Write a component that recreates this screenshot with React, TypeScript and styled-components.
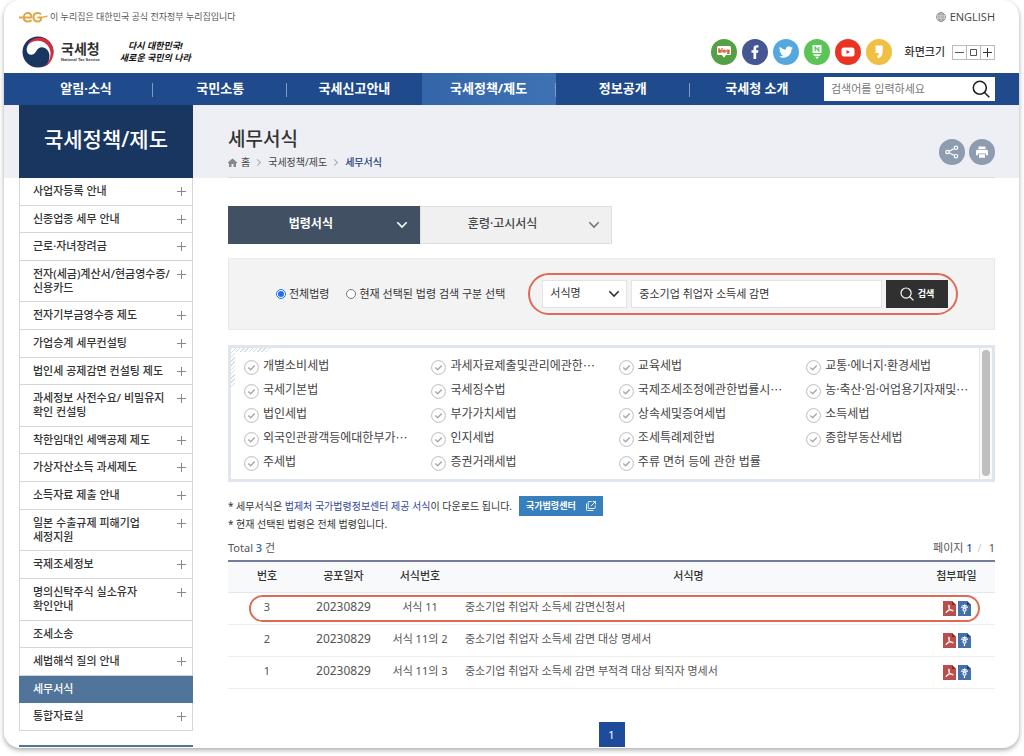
import React from "react";
import styled, { createGlobalStyle, css } from "styled-components";

const GlobalStyle = createGlobalStyle`
  *, *::before, *::after { box-sizing: border-box; }
  body {
    margin: 0;
    background: #fff;
    color: #333;
    font-family: "Noto Sans", "Noto Sans CJK KR", sans-serif;
    font-size: 11px;
    line-height: 16px;
  }
  a { color: inherit; text-decoration: none; }
  ul, ol { list-style: none; margin: 0; padding: 0; }
  h1, h2, p { margin: 0; }
  button, input, select { font: inherit; color: inherit; }
  button { padding: 0; border: 0; cursor: pointer; }
`;

const Card = styled.div`
  margin: 0 5px 8px 4px;
  overflow: hidden;
  background: #fff;
  border-radius: 16px;
  box-shadow: 0 2px 5px rgba(0, 0, 0, 0.34);
`;

/* ---------- header ---------- */

const TopBar = styled.div`
  display: flex;
  justify-content: space-between;
  align-items: center;
  height: 34px;
  padding: 0 24px 0 15px;
`;

const Notice = styled.p`
  display: flex;
  align-items: center;
  gap: 2px;
  font-size: 9px;
  color: #555;
`;

const LangLink = styled.a`
  display: flex;
  align-items: center;
  gap: 4px;
  color: #444;
  font-family: "Open Sans", sans-serif;
`;

const BrandBar = styled.div`
  display: flex;
  align-items: center;
  height: 39px;
  padding: 0 24px 3px 18px;
`;

const Brand = styled.a`
  display: flex;
  align-items: center;
  gap: 7px;
`;

const BrandText = styled.span`
  display: flex;
  flex-direction: column;
`;

const BrandName = styled.strong`
  font-size: 14px;
  line-height: 16px;
  color: #333;
`;

const BrandSub = styled.span`
  font-family: "Liberation Sans", sans-serif;
  font-size: 4px;
  font-weight: 700;
  line-height: 6px;
`;

const Slogan = styled.p`
  display: flex;
  flex-direction: column;
  margin-left: 20px;
  font-size: 9px;
  font-style: italic;
  font-weight: 700;
  line-height: 12px;
  text-align: center;
  color: #111;
`;

const Social = styled.ul`
  display: flex;
  gap: 5px;
  margin-left: auto;
`;

const SocialLink = styled.a<{ $bg: string }>`
  display: flex;
  align-items: center;
  justify-content: center;
  width: 26px;
  height: 26px;
  border-radius: 50%;
  background: ${(p) => p.$bg};
`;

const SizeLabel = styled.span`
  margin: 0 7px 0 13px;
  font-weight: 500;
`;

const SizeGroup = styled.div`
  display: flex;
  border: 1px solid #bbb;
`;

const SizeButton = styled.button`
  display: flex;
  align-items: center;
  justify-content: center;
  width: 13px;
  height: 13px;
  background: #fff;
  &:not(:first-child) {
    width: 14px;
    border-left: 1px solid #bbb;
  }
`;

const Nav = styled.nav`
  display: flex;
  align-items: center;
  height: 32px;
  padding: 0 24px 0 15px;
  background: #1f4b8d;
`;

const NavList = styled.ul`
  display: flex;
  flex: 1;
`;

const NavItem = styled.li<{ $active?: boolean; $divided?: boolean }>`
  position: relative;
  flex: 1 1 0;
  ${(p) => p.$active && css`background: linear-gradient(90deg, #3365a8, #3f72b4);`}
  ${(p) =>
    p.$divided &&
    css`
      &::after {
        content: "";
        position: absolute;
        top: 10px;
        right: 0;
        width: 1px;
        height: 14px;
        background: #7f9cc7;
      }
    `}
`;

const NavLink = styled.a`
  display: block;
  height: 32px;
  color: #fff;
  font-size: 13px;
  font-weight: 700;
  line-height: 30px;
  text-align: center;
`;

const SiteSearch = styled.form`
  display: flex;
  align-items: center;
  width: 171px;
  height: 24px;
  padding: 0 5px 0 7px;
  background: #fff;
`;

const SiteSearchInput = styled.input`
  flex: 1;
  min-width: 0;
  height: 22px;
  padding: 0 0 2px;
  border: 0;
  outline: 0;
  background: none;
  font-size: 11px;
  &::placeholder { color: #777; opacity: 1; }
`;

const IconButton = styled.button`
  display: flex;
  background: none;
`;

/* ---------- page heading ---------- */

const PageHead = styled.div`
  display: flex;
  gap: 35px;
  height: 73px;
  padding: 0 24px 0 15px;
  background: #eeeff4;
`;

const SideTitle = styled.h2`
  width: 174px;
  background: #18365f;
  color: #fff;
  font-size: 21px;
  font-weight: 500;
  line-height: 68px;
  text-align: center;
`;

const HeadContent = styled.div`
  display: flex;
  flex: 1;
  justify-content: space-between;
  align-items: flex-start;
  padding-top: 22px;
  border-bottom: 1px solid #dcdde3;
`;

const Title = styled.h1`
  font-size: 19px;
  font-weight: 500;
  line-height: 24px;
`;

const Crumbs = styled.ol`
  display: flex;
  align-items: center;
  margin-top: 4px;
  font-size: 10px;
  line-height: 14px;
  color: #444;
`;

const Crumb = styled.li<{ $current?: boolean }>`
  display: flex;
  align-items: center;
  ${(p) => p.$current && css`color: #1f3f78; font-weight: 500;`}
  a { display: flex; align-items: center; gap: 4px; }
  &:not(:first-child)::before {
    content: "";
    width: 5px;
    height: 5px;
    margin: 0 8px 0 5px;
    border: solid #aaa;
    border-width: 1px 1px 0 0;
    transform: rotate(45deg);
  }
`;

const Tools = styled.div`
  display: flex;
  gap: 4px;
  padding-top: 12px;
`;

const RoundButton = styled.button`
  display: flex;
  align-items: center;
  justify-content: center;
  width: 26px;
  height: 26px;
  border-radius: 50%;
  background: #8d9cb0;
`;

/* ---------- body ---------- */

const Body = styled.div`
  display: flex;
  gap: 35px;
  padding: 0 24px 0 15px;
`;

const Sidebar = styled.aside`
  display: flex;
  flex-direction: column;
  width: 174px;
  &::after {
    content: "";
    height: 3px;
    margin-top: 14px;
    border-top: 2px solid #51749a;
  }
`;

const Menu = styled.ul`
  display: flex;
  flex: 1;
  flex-direction: column;
  border: solid #d6d6d6;
  border-width: 0 1px;
`;

const MenuItem = styled.li<{ $active?: boolean }>`
  display: flex;
  flex: 1 0 auto;
  justify-content: space-between;
  padding: 6px 6px 6px 13px;
  border-bottom: 1px solid #d6d6d6;
  font-weight: 500;
  line-height: 14px;
  white-space: pre-line;
  ${(p) =>
    p.$active &&
    css`
      margin: 0 -1px;
      padding-left: 14px;
      border-color: #51749a;
      background: #51749a;
      color: #fff;
    `}
`;

const Main = styled.main`
  flex: 1;
  min-width: 0;
  padding: 28px 0 1px;
`;

const Tabs = styled.div`
  display: flex;
  width: 50%;
`;

const Tab = styled.button<{ $active?: boolean }>`
  display: flex;
  flex: 1;
  align-items: center;
  height: 38px;
  padding: 0 11px 0 9px;
  border: 1px solid ${(p) => (p.$active ? "#425063" : "#dfdfdf")};
  background: ${(p) => (p.$active ? "#425063" : "#f0f0f0")};
  color: ${(p) => (p.$active ? "#fff" : "#444")};
  font-size: 12px;
  font-weight: ${(p) => (p.$active ? 700 : 500)};
  span { flex: 1; padding: 0 12px 2px 0; }
`;

const SearchPanel = styled.form`
  display: flex;
  align-items: center;
  height: 72px;
  margin-top: 14px;
  padding: 0 36px 0 47px;
  border: 1px solid #e9e9e9;
  background: #f3f3f3;
`;

const RadioLabel = styled.label`
  display: flex;
  align-items: center;
  gap: 3px;
  margin-right: 17px;
  white-space: nowrap;
  input { width: 10px; height: 10px; margin: 0; accent-color: #1f6ff0; }
`;

const Highlight = styled.div`
  display: flex;
  flex: 1;
  gap: 4px;
  min-width: 0;
  margin-left: 6px;
  padding: 5px 8px 5px 12px;
  border: 2px solid #df6a56;
  border-radius: 21px;
`;

const SelectWrap = styled.div`
  position: relative;
  width: 85px;
  svg {
    position: absolute;
    top: 10px;
    right: 7px;
    pointer-events: none;
  }
`;

const fieldBox = css`
  height: 28px;
  padding: 0 7px 2px;
  border: 1px solid #e2e4e4;
  border-radius: 0;
  background: #fff;
`;

const Select = styled.select`
  ${fieldBox}
  width: 100%;
  appearance: none;
`;

const Keyword = styled.input`
  ${fieldBox}
  flex: 1;
  min-width: 0;
`;

const SearchButton = styled.button`
  display: flex;
  align-items: center;
  justify-content: center;
  gap: 4px;
  width: 62px;
  height: 28px;
  background: #303030;
  color: #fff;
  font-size: 9px;
  font-weight: 700;
`;

const LawBox = styled.div`
  position: relative;
  display: flex;
  height: 137px;
  margin-top: 15px;
  border: 3px solid #dfe6ee;
  &::before {
    content: "";
    position: absolute;
    top: 0;
    left: 0;
    width: 41px;
    height: 41px;
    background: repeating-linear-gradient(135deg, #d5dfea 0 1px, #fff 1px 3px);
    clip-path: polygon(0 0, 100% 0, 92% 10%, 10% 10%, 10% 92%, 0 100%);
  }
`;

const LawGrid = styled.ul`
  display: grid;
  flex: 1;
  grid-template-columns: repeat(3, 51fr) 47fr;
  grid-auto-rows: 24px;
  padding: 6px 0 0 13px;
`;

const LawLabel = styled.label`
  position: relative;
  display: flex;
  align-items: center;
  height: 24px;
  color: #444;
  font-size: 12px;
  white-space: nowrap;
  svg { margin: 3px 4px 0 0; }
  input {
    position: absolute;
    width: 15px;
    height: 15px;
    margin: 0;
    opacity: 0;
  }
`;

/* the Korean face sets the ellipsis at mid-height */
const Ellipsis = styled.span`
  font-family: "Noto Sans CJK KR", sans-serif;
`;

const ScrollTrack = styled.div`
  width: 13px;
  padding: 2px 2px 3px;
  border-left: 1px solid #e6e6e6;
  background: #fafafa;
`;

const ScrollThumb = styled.div`
  width: 8px;
  height: 100%;
  border-radius: 4px;
  background: #bfbfbf;
`;

const Note = styled.p`
  display: flex;
  align-items: center;
  font-size: 10px;
  line-height: 16px;
  white-space: pre;
`;

const Notes = styled.div`
  margin-top: 14px;
`;

const NoteLink = styled.a`
  color: #2f4599;
`;

const CenterLink = styled.a`
  display: flex;
  align-items: center;
  justify-content: space-between;
  width: 84px;
  height: 20px;
  margin-left: 7px;
  padding: 0 7px;
  background: #3880bd;
  color: #fff;
  font-size: 9px;
  font-weight: 700;
`;

const ListInfo = styled.div`
  display: flex;
  justify-content: space-between;
  margin: 8px 0 4px;
  color: #555;
`;

const Accent = styled.strong`
  color: #2c5cab;
  font-weight: 500;
`;

const Slash = styled.span`
  margin: 0 7px 0 5px;
  color: #ccc;
`;

const Table = styled.table`
  width: 100%;
  border-top: 2px solid #757d9b;
  border-spacing: 0;
  table-layout: fixed;
  text-align: center;
`;

const Th = styled.th<{ $width?: number }>`
  ${(p) => p.$width && css`width: ${p.$width}px;`}
  height: 31px;
  padding: 0 0 3px;
  border-bottom: 1px solid #e4e7ec;
  background: #f8f9fb;
  font-weight: 500;
`;

const Row = styled.tr`
  position: relative;
`;

const Td = styled.td<{ $left?: boolean; $large?: boolean }>`
  height: 32px;
  padding: 0 0 3px ${(p) => (p.$left ? 6 : 0)}px;
  border-bottom: 1px solid #efefef;
  color: #555;
  font-size: ${(p) => (p.$large ? 12 : 11)}px;
  text-align: ${(p) => (p.$left ? "left" : "center")};
`;

const RowRing = styled.span`
  position: absolute;
  inset: 2px 15px 3px 21px;
  border: 2px solid #df6a56;
  border-radius: 14px;
  pointer-events: none;
`;

const Files = styled.span`
  display: flex;
  justify-content: center;
  gap: 2px;
  a { display: flex; padding-top: 2px; }
`;

const Pagination = styled.nav`
  display: flex;
  justify-content: center;
  margin-top: 33px;
`;

const PageButton = styled.button`
  width: 26px;
  height: 25px;
  background: #1f4b9b;
  color: #fff;
  font-size: 11px;
`;

/* ---------- icons ---------- */

const EgMark = () => (
  <svg width="29" height="12" viewBox="0 0 29 12" fill="none" stroke="#e0a84a" strokeWidth="2" aria-hidden="true">
    <path d="M0 6.500h12.500c0-3-1.800-4.500-3.800-4.500S4.800 3.600 4.800 6.300s1.800 4.300 4 4.300c1.500 0 2.700-.5 3.600-1.600" />
    <path d="M22 3.300C21.200 2.300 20 2 18.700 2c-2.500 0-4.200 1.800-4.200 4.300s1.700 4.300 4.200 4.300c2.200 0 3.600-1.500 3.600-4.100H18.500" />
    <path d="M22 6.500c2.500 0 4-1.200 6.500-1.200" strokeWidth="1.500" />
  </svg>
);

const Globe = () => (
  <svg width="10" height="10" viewBox="0 0 9 9" fill="none" stroke="#888" strokeWidth="0.800" aria-hidden="true">
    <circle cx="4.500" cy="4.500" r="4" />
    <ellipse cx="4.500" cy="4.500" rx="1.900" ry="4" />
    <path d="M.5 4.500h8M4.500.5v8M1.200 2.500h6.600M1.200 6.500h6.600" strokeWidth="0.600" />
  </svg>
);

const Taegeuk = () => (
  <svg width="32" height="32" viewBox="0 0 32 32" aria-hidden="true">
    <circle cx="16" cy="16" r="15.500" fill="#18365f" />
    <path d="M5.500 10C7.500 5 12 2.500 17 2.500c7 0 11.500 5 14 11L32 32h-9.500c3.500-3.500 5.300-8 5-12.500-.3-4.500-3.500-8.300-7.500-8.300-3 0-4.600 1.800-5.800 4-1.300 2.300-3 3.600-5.200 3.600-3.500 0-5.500-4.500-3.500-8.800z" fill="#fff" />
    <path d="M5.500 9.500C7.800 4.500 12 1.800 17 1.800c3 0 5.200.4 7.500 1.700C29 6.200 31.700 11 31.500 16.500c-.3 6.500-3.500 11.500-9 14.500 4-4 6.300-8.800 6-14C28.200 9.800 22.500 4.700 16 4.700c-4.500 0-8 1.500-10.500 4.800z" fill="#d9293b" />
  </svg>
);

const BlogIcon = () => (
  <svg width="16" height="14" viewBox="0 0 16 14" aria-hidden="true">
    <path d="M2.500 1h11Q15 1 15 2.500v6Q15 10 13.500 10H10l-2 2.800L6 10H2.500Q1 10 1 8.500v-6Q1 1 2.500 1z" fill="#fff" />
    <g fill="none" stroke="#d8582b" strokeWidth="1.200">
      <path d="M3 3v4.500M6 3v4.500M12.900 4.500v4H11" />
      <circle cx="3.900" cy="6.200" r="1" />
      <circle cx="8.300" cy="6.200" r="1" />
      <circle cx="11.800" cy="6.100" r="1" />
    </g>
  </svg>
);

const FacebookIcon = () => (
  <svg width="14" height="16" viewBox="0 0 14 16" aria-hidden="true">
    <path d="M5.500 15V8.800h-2V6.200h2V4.500C5.500 2.300 6.700 1.200 8.800 1.200c.8 0 1.300 0 1.700.1v2.300H9.300c-.9 0-1.100.5-1.100 1.200v1.400h2.200l-.3 2.600H8.200V15z" fill="#fff" />
  </svg>
);

const TwitterIcon = () => (
  <svg width="14" height="14" viewBox="0 0 24 24" aria-hidden="true">
    <path d="M23.950 4.570a10 10 0 0 1-2.820.77 4.960 4.960 0 0 0 2.160-2.720c-.95.55-2 .95-3.130 1.180a4.920 4.920 0 0 0-8.380 4.480C7.690 8.100 4.070 6.130 1.640 3.160a4.920 4.920 0 0 0 1.520 6.570 4.900 4.900 0 0 1-2.230-.61v.06a4.920 4.920 0 0 0 3.950 4.830 5 5 0 0 1-2.210.08 4.940 4.940 0 0 0 4.600 3.420A9.870 9.870 0 0 1 0 19.540a14 14 0 0 0 7.550 2.210c9.050 0 14-7.500 14-13.980 0-.21 0-.42-.02-.63a9.940 9.940 0 0 0 2.420-2.570z" fill="#fff" />
  </svg>
);

const PostIcon = () => (
  <svg width="12" height="16" viewBox="0 0 12 16" aria-hidden="true">
    <path d="M1.500 1h9v8h-9z" fill="#fff" />
    <path d="M4.200 7.200V3l3.600 4V3" fill="none" stroke="#5cc457" strokeWidth="1.200" />
    <path d="M1.500 10.300h9L8.300 12H3.700zM4 12.800h4L6 15z" fill="#fff" />
  </svg>
);

const YoutubeIcon = () => (
  <svg width="14" height="10" viewBox="0 0 14 10" aria-hidden="true">
    <rect x="0.500" y="0.500" width="13" height="9" rx="2.500" fill="#fff" />
    <path d="M5.500 3v4L9 5z" fill="#ea3323" />
  </svg>
);

const StoryIcon = () => (
  <svg width="12" height="16" viewBox="0 0 12 16" aria-hidden="true">
    <path d="M2.500 1.500h7.200v6c0 3.500-1.500 5.700-4.200 7L3.800 12.300c1.400-.8 2.100-1.900 2.200-3.300H2.500z" fill="#fff" />
  </svg>
);

const SearchIcon = ({ size, color, width }: { size: number; color: string; width: number }) => (
  <svg width={size} height={size} viewBox="0 0 18 18" fill="none" stroke={color} strokeWidth={width} aria-hidden="true">
    <circle cx="7.800" cy="7.800" r="6.500" />
    <path d="M12.500 12.500l4.800 4.800" />
  </svg>
);

const HomeIcon = () => (
  <svg width="9" height="9" viewBox="0 0 9 9" aria-hidden="true">
    <path d="M4.500.5L0 4.300v.9h1V9h2.500V6h2v3H8V5.200h1v-.9z" fill="#888" />
  </svg>
);

const ShareIcon = () => (
  <svg width="14" height="14" viewBox="0 0 14 14" fill="none" stroke="#fff" strokeWidth="1.200" aria-hidden="true">
    <circle cx="2.500" cy="7" r="1.700" />
    <circle cx="11" cy="2.800" r="1.700" />
    <circle cx="11" cy="11.200" r="1.700" />
    <path d="M4 6.200l5.500-2.700M4 7.800l5.500 2.700" />
  </svg>
);

const PrintIcon = () => (
  <svg width="14" height="14" viewBox="0 0 14 14" aria-hidden="true">
    <path d="M3.500 1.500h7V4h-7zM2.500 4.800h9q1.500 0 1.500 1.500v4h-2V8.500H3v1.800H1v-4q0-1.500 1.500-1.500zM4 9.300h6v3.400H4z" fill="#fff" />
  </svg>
);

const PlusIcon = () => (
  <svg width="9" height="9" viewBox="0 0 9 9" stroke="#888" aria-hidden="true">
    <path d="M0 4.500h9M4.500 0v9" />
  </svg>
);

const Plus = styled.button`
  display: flex;
  flex: none;
  align-self: flex-start;
  padding-top: 3px;
  background: none;
`;

const Chevron = ({ color }: { color: string }) => (
  <svg width="12" height="8" viewBox="0 0 12 8" fill="none" stroke={color} strokeWidth="1.600" aria-hidden="true">
    <path d="M1.300 1.300L6 6l4.700-4.700" />
  </svg>
);

const CheckCircle = () => (
  <svg width="15" height="15" viewBox="0 0 15 15" fill="none" aria-hidden="true">
    <circle cx="7.500" cy="7.500" r="6.900" stroke="#bbb" />
    <path d="M4.300 7.500l2.400 2.300 4-4.200" stroke="#aaa" strokeWidth="1.500" />
  </svg>
);

const ExternalIcon = () => (
  <svg width="10" height="10" viewBox="0 0 10 10" fill="none" stroke="#fff" strokeWidth="0.900" aria-hidden="true">
    <path d="M5.500.5H3q-.8 0-.8.8v5.400q0 .8.800.8h5.400q.8 0 .8-.8V4.500M.5 2.500v6.200q0 .8.800.8h6.200M5 5l4-4M6.700.500h2.800v2.800" />
  </svg>
);

const PdfIcon = () => (
  <svg width="13" height="15" viewBox="0 0 13 15" aria-hidden="true">
    <path d="M0 0h9l4 4v11H0z" fill="#b94f4d" />
    <path d="M9 0v4h4z" fill="#7f2f33" />
    <path d="M5.500 4.300c1.300-.5 1.300 1.200.8 2.900-.5 1.800-1.800 4.300-3 4.500-1 0-.3-1.400 1.900-2.200 2-.7 5-.9 5 .1s-2.600 0-3.800-2c-.6-1-1.200-2.800-.9-3.300z" fill="none" stroke="#fff" />
  </svg>
);

const HwpIcon = () => (
  <svg width="13" height="15" viewBox="0 0 13 15" aria-hidden="true">
    <path d="M0 0h9l4 4v11H0z" fill="#4471ad" />
    <path d="M9 0v4h4z" fill="#203f73" />
    <path d="M4.500 4.500h4M3 6.200h7M6.500 3.500v2M6.500 10.500v2.500" stroke="#fff" strokeWidth="1.200" />
    <circle cx="6.500" cy="8.700" r="1.500" fill="none" stroke="#fff" strokeWidth="1.200" />
  </svg>
);

/* ---------- data ---------- */

const navItems = ["알림·소식", "국민소통", "국세신고안내", "국세정책/제도", "정보공개", "국세청 소개"];
const activeNav = 3;

const socials = [
  { name: "블로그", bg: "#54a047", icon: <BlogIcon /> },
  { name: "페이스북", bg: "#445793", icon: <FacebookIcon /> },
  { name: "트위터", bg: "#55a8de", icon: <TwitterIcon /> },
  { name: "포스트", bg: "#5cc457", icon: <PostIcon /> },
  { name: "유튜브", bg: "#ea3323", icon: <YoutubeIcon /> },
  { name: "카카오스토리", bg: "#f1bf42", icon: <StoryIcon /> },
];

const menu: { label: string; leaf?: boolean; active?: boolean }[] = [
  { label: "사업자등록 안내" },
  { label: "신종업종 세무 안내" },
  { label: "근로·자녀장려금" },
  { label: "전자(세금)계산서/현금영수증/\n신용카드" },
  { label: "전자기부금영수증 제도" },
  { label: "가업승계 세무컨설팅" },
  { label: "법인세 공제감면 컨설팅 제도" },
  { label: "과세정보 사전수요/ 비밀유지\n확인 컨설팅" },
  { label: "착한임대인 세액공제 제도" },
  { label: "가상자산소득 과세제도" },
  { label: "소득자료 제출 안내" },
  { label: "일본 수출규제 피해기업\n세정지원" },
  { label: "국제조세정보" },
  { label: "명의신탁주식 실소유자\n확인안내" },
  { label: "조세소송", leaf: true },
  { label: "세법해석 질의 안내" },
  { label: "세무서식", leaf: true, active: true },
  { label: "통합자료실" },
];

const laws: { name: string; cut?: boolean }[] = [
  { name: "개별소비세법" },
  { name: "과세자료제출및관리에관한", cut: true },
  { name: "교육세법" },
  { name: "교통·에너지·환경세법" },
  { name: "국세기본법" },
  { name: "국세징수법" },
  { name: "국제조세조정에관한법률시", cut: true },
  { name: "농·축산·임·어업용기자재및", cut: true },
  { name: "법인세법" },
  { name: "부가가치세법" },
  { name: "상속세및증여세법" },
  { name: "소득세법" },
  { name: "외국인관광객등에대한부가", cut: true },
  { name: "인지세법" },
  { name: "조세특례제한법" },
  { name: "종합부동산세법" },
  { name: "주세법" },
  { name: "증권거래세법" },
  { name: "주류 면허 등에 관한 법률" },
];

const forms = [
  { no: 3, date: "20230829", code: "서식 11", name: "중소기업 취업자 소득세 감면신청서", ringed: true },
  { no: 2, date: "20230829", code: "서식 11의 2", name: "중소기업 취업자 소득세 감면 대상 명세서" },
  { no: 1, date: "20230829", code: "서식 11의 3", name: "중소기업 취업자 소득세 감면 부적격 대상 퇴직자 명세서" },
];

export default function App() {
  return (
    <>
      <GlobalStyle />
      <Card>
        <header>
          <TopBar>
            <Notice>
              <EgMark />이 누리집은 대한민국 공식 전자정부 누리집입니다
            </Notice>
            <LangLink href="#english">
              <Globe />
              ENGLISH
            </LangLink>
          </TopBar>
          <BrandBar>
            <Brand href="#home">
              <Taegeuk />
              <BrandText>
                <BrandName>국세청</BrandName>
                <BrandSub>National Tax Service</BrandSub>
              </BrandText>
            </Brand>
            <Slogan>
              <span>다시 대한민국!</span>
              <span>새로운 국민의 나라</span>
            </Slogan>
            <Social>
              {socials.map((s) => (
                <li key={s.name}>
                  <SocialLink href="#social" aria-label={s.name} $bg={s.bg}>
                    {s.icon}
                  </SocialLink>
                </li>
              ))}
            </Social>
            <SizeLabel id="size-label">화면크기</SizeLabel>
            <SizeGroup role="group" aria-labelledby="size-label">
              <SizeButton aria-label="축소">
                <svg width="9" height="9" stroke="#555"><path d="M0 4.500h9" /></svg>
              </SizeButton>
              <SizeButton aria-label="기본">
                <svg width="7" height="7" stroke="#555" fill="none"><path d="M.5.5h6v6h-6z" /></svg>
              </SizeButton>
              <SizeButton aria-label="확대">
                <svg width="9" height="9" stroke="#333"><path d="M0 4.500h9M4.500 0v9" /></svg>
              </SizeButton>
            </SizeGroup>
          </BrandBar>
          <Nav aria-label="주 메뉴">
            <NavList>
              {navItems.map((label, i) => (
                <NavItem key={label} $active={i === activeNav} $divided={i !== activeNav - 1 && i < navItems.length - 1}>
                  <NavLink href="#menu">{label}</NavLink>
                </NavItem>
              ))}
            </NavList>
            <SiteSearch>
              <SiteSearchInput aria-label="통합검색" placeholder="검색어를 입력하세요" />
              <IconButton type="button" aria-label="검색">
                <SearchIcon size={18} color="#222" width={1.6} />
              </IconButton>
            </SiteSearch>
          </Nav>
        </header>

        <PageHead>
          <SideTitle>국세정책/제도</SideTitle>
          <HeadContent>
            <div>
              <Title>세무서식</Title>
              <Crumbs>
                <Crumb><a href="#home"><HomeIcon />홈</a></Crumb>
                <Crumb><a href="#policy">국세정책/제도</a></Crumb>
                <Crumb $current>세무서식</Crumb>
              </Crumbs>
            </div>
            <Tools>
              <RoundButton aria-label="공유"><ShareIcon /></RoundButton>
              <RoundButton aria-label="인쇄"><PrintIcon /></RoundButton>
            </Tools>
          </HeadContent>
        </PageHead>

        <Body>
          <Sidebar>
            <Menu>
              {menu.map((m) => (
                <MenuItem key={m.label} $active={m.active}>
                  <a href="#item">{m.label}</a>
                  {!m.leaf && <Plus aria-label="펼치기"><PlusIcon /></Plus>}
                </MenuItem>
              ))}
            </Menu>
          </Sidebar>

          <Main>
            <Tabs>
              <Tab $active><span>법령서식</span><Chevron color="#fff" /></Tab>
              <Tab><span>훈령·고시서식</span><Chevron color="#777" /></Tab>
            </Tabs>

            <SearchPanel>
              <RadioLabel>
                <input type="radio" name="scope" defaultChecked />전체법령
              </RadioLabel>
              <RadioLabel>
                <input type="radio" name="scope" />현재 선택된 법령 검색 구분 선택
              </RadioLabel>
              <Highlight>
                <SelectWrap>
                  <Select aria-label="검색 조건" defaultValue="서식명">
                    <option>서식명</option>
                  </Select>
                  <Chevron color="#333" />
                </SelectWrap>
                <Keyword aria-label="검색어" defaultValue="중소기업 취업자 소득세 감면" />
                <SearchButton type="button">
                  <SearchIcon size={14} color="#fff" width={1.5} />
                  검색
                </SearchButton>
              </Highlight>
            </SearchPanel>

            <LawBox>
              <LawGrid>
                {laws.map((law) => (
                  <li key={law.name}>
                    <LawLabel>
                      <input type="checkbox" />
                      <CheckCircle />
                      {law.name}
                      {law.cut && <Ellipsis>…</Ellipsis>}
                    </LawLabel>
                  </li>
                ))}
              </LawGrid>
              <ScrollTrack aria-hidden="true"><ScrollThumb /></ScrollTrack>
            </LawBox>

            <Notes>
              <Note>
                {"* 세무서식은 "}
                <NoteLink href="#law">법제처 국가법령정보센터 제공 서식</NoteLink>
                {"이 다운로드 됩니다."}
                <CenterLink href="#center">국가법령센터<ExternalIcon /></CenterLink>
              </Note>
              <Note>* 현재 선택된 법령은 전체 법령입니다.</Note>
            </Notes>

            <ListInfo>
              <span>Total <Accent>3</Accent> 건</span>
              <span>페이지 <Accent>1</Accent><Slash>/</Slash>1</span>
            </ListInfo>

            <Table>
              <thead>
                <tr>
                  <Th $width={78}>번호</Th>
                  <Th $width={75}>공포일자</Th>
                  <Th $width={78}>서식번호</Th>
                  <Th>서식명</Th>
                  <Th $width={77}>첨부파일</Th>
                </tr>
              </thead>
              <tbody>
                {forms.map((f) => (
                  <Row key={f.no}>
                    <Td>
                      {f.no}
                      {f.ringed && <RowRing />}
                    </Td>
                    <Td $large>{f.date}</Td>
                    <Td>{f.code}</Td>
                    <Td $left>{f.name}</Td>
                    <Td>
                      <Files>
                        <a href="#pdf" aria-label="PDF 파일"><PdfIcon /></a>
                        <a href="#hwp" aria-label="HWP 파일"><HwpIcon /></a>
                      </Files>
                    </Td>
                  </Row>
                ))}
              </tbody>
            </Table>

            <Pagination aria-label="페이지">
              <PageButton aria-current="page">1</PageButton>
            </Pagination>
          </Main>
        </Body>
      </Card>
    </>
  );
}
